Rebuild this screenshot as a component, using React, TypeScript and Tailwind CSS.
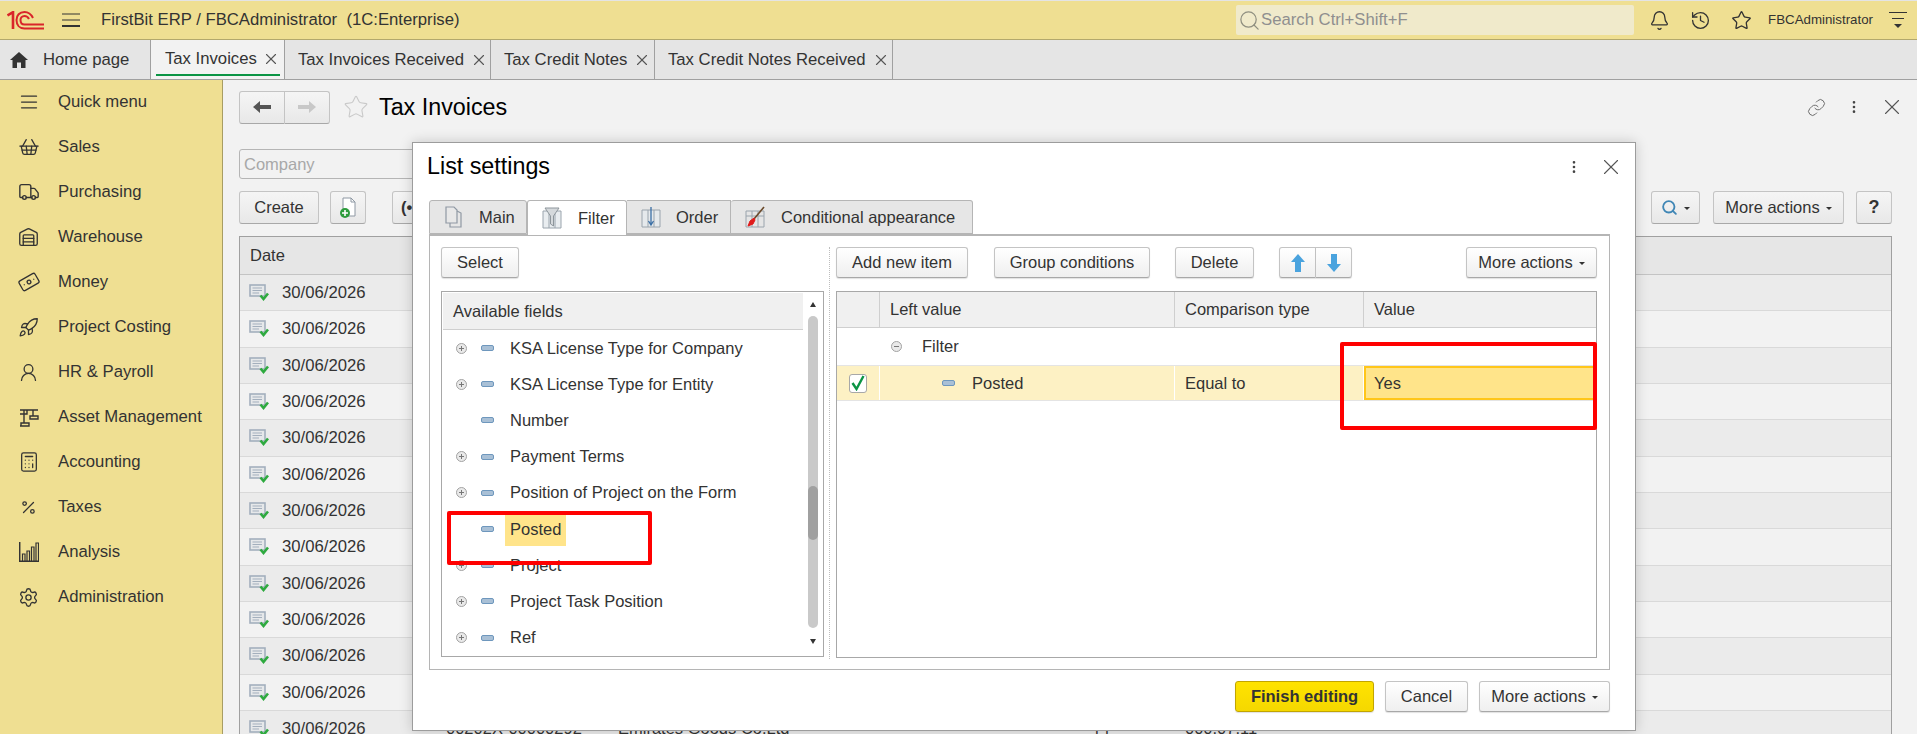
import type { ReactNode } from "react";
import {
  AlignJustify,
  Banknote,
  Bell,
  Calculator,
  History,
  Link,
  MoreVertical,
  Percent,
  Rocket,
  Search,
  Settings,
  ShoppingBasket,
  Star,
  Truck,
  UserRound,
  Warehouse,
  X,
} from "lucide-react";

function Logo() {
  return (
    <svg width="38" height="19" viewBox="0 0 38 19" fill="none" stroke="#d9252a" strokeWidth="2">
      <path d="M0.5 4.5 L6 1.2 V18" strokeWidth="2.6" />
      <path d="M26 7 C24 3 21 1 17.5 1 C12.5 1 9.5 4.5 9.5 9 C9.5 14 12.5 17.5 17.5 17.5 H37" />
      <path d="M22 8 C21 6 19.5 5 17.5 5 C15 5 13.5 7 13.5 9 C13.5 11.5 15 13.5 17.5 13.5 H37" />
    </svg>
  );
}

function Burger() {
  return (
    <svg width="18" height="14" viewBox="0 0 18 14" stroke="#333">
      <path d="M0 1 H18" />
      <path d="M0 7 H18" />
      <path d="M0 13 H18" strokeWidth="2" />
    </svg>
  );
}

function HomeIcon() {
  return (
    <svg width="18" height="16" viewBox="0 0 18 16" fill="#333">
      <path d="M9 0 L18 8 H15.5 V16 H11 V10.5 H7 V16 H2.5 V8 H0 Z" />
    </svg>
  );
}

function AssetIcon() {
  return (
    <svg width="20" height="20" viewBox="0 0 20 20" fill="none" stroke="#333" strokeWidth="1.4">
      <path d="M1 3 H19 M5 3 V16 M1 19 H10 V16 H2 V19 M8 3 V7 H1 M14 3 V9 M11 9 H19 V12 H11 Z" />
    </svg>
  );
}

function ChartIcon() {
  return (
    <svg width="20" height="20" viewBox="0 0 20 20" fill="none" stroke="#333" strokeWidth="1.2">
      <path d="M0.7 0 V19.3 H20" strokeWidth="1.5" />
      <path d="M3.5 19 V12 H6 V19 M8 19 V9 H10.5 V19 M12.5 19 V5 H15 V19 M17 19 V1 H19.5 V19" />
    </svg>
  );
}

function PostedDocIcon() {
  return (
    <svg width="20" height="17" viewBox="0 0 20 17" fill="none">
      <rect x="1" y="1" width="15" height="11" fill="#e6e8ea" stroke="#a3afbd" strokeWidth="1.6" />
      <path d="M3.5 4 H13 M3.5 6.5 H13 M3.5 9 H10" stroke="#a3afbd" />
      <path d="M11.5 11.5 L14.5 15 L19 9.5" stroke="#2eaa3f" strokeWidth="2.6" />
    </svg>
  );
}

function DocAddIcon() {
  return (
    <svg width="18" height="22" viewBox="0 0 18 22" fill="none">
      <path d="M4 1 H12 L16 5 V19 H4 Z" fill="#fff" stroke="#8e98a3" />
      <path d="M12 1 V5 H16" stroke="#8e98a3" />
      <circle cx="6" cy="16" r="5" fill="#2d9c3c" />
      <path d="M6 13 V19 M3 16 H9" stroke="#fff" strokeWidth="1.6" />
    </svg>
  );
}

function PageTabIcon() {
  return (
    <svg width="18" height="22" viewBox="0 0 18 22" fill="none" stroke="#8f98a3" strokeWidth="1.2">
      <path d="M1 1 H9 L12 4 V17 H1 Z" fill="#e8e8e8" />
      <path d="M12 5 L16 7 V21 H5 V17" />
    </svg>
  );
}

function FilterTabIcon() {
  return (
    <svg width="20" height="22" viewBox="0 0 20 22" fill="none" stroke="#9aa4ad">
      <path d="M1 4 H19 V21 H1 Z M7 4 V21 M13 4 V21" fill="#e9edf0" />
      <path d="M3 1 H17 L11.5 9 V19 L8.5 17 V9 Z" fill="#d5d9dc" stroke="#8e969c" />
    </svg>
  );
}

function OrderTabIcon() {
  return (
    <svg width="20" height="22" viewBox="0 0 20 22" fill="none" stroke="#9aa4ad">
      <path d="M1 4 H19 V21 H1 Z M7 4 V21 M13 4 V21" fill="#e5e9ec" />
      <path d="M10 1 V18 M7.5 15 L10 19 L12.5 15" stroke="#3b6fa5" strokeWidth="1.3" />
    </svg>
  );
}

function AppearanceTabIcon() {
  return (
    <svg width="20" height="22" viewBox="0 0 20 22" fill="none" stroke="#9aa4ad">
      <path d="M1 5 H19 V21 H1 Z M7 5 V21 M13 5 V21 M1 10 H19" fill="#e5e5e5" />
      <path d="M19 1 L9 13" stroke="#6b4a2a" strokeWidth="1.6" />
      <path d="M9 12 L5 15 L3 20 L8 18 L10 14 Z" fill="#e01b1b" stroke="#e01b1b" />
    </svg>
  );
}

function Expander({ minus }: { minus?: boolean }) {
  return (
    <svg width="11" height="11" viewBox="0 0 11 11" fill="#e9e9e9" stroke="#a2a2a2">
      <circle cx="5.5" cy="5.5" r="5" />
      <path d={minus ? "M3 5.5 H8" : "M3 5.5 H8 M5.5 3 V8"} stroke="#777" />
    </svg>
  );
}

function FieldIcon() {
  return <span className="block h-[6px] w-[13px] rounded-[2px] border border-[#6e97bd] bg-[#a9c0d6]" />;
}

function Arrow({ up }: { up?: boolean }) {
  return (
    <svg width="14" height="18" viewBox="0 0 14 18" fill="#4aa3de" className={up ? "" : "rotate-180"}>
      <path d="M7 0 L14 8 H10 V18 H4 V8 H0 Z" />
    </svg>
  );
}

function Caret() {
  return <span className="ml-[6px] mt-[2px] h-0 w-0 border-x-[3px] border-t-[3px] border-x-transparent border-t-[#333]" />;
}

function Btn({ children, className = "" }: { children: ReactNode; className?: string }) {
  return (
    <div
      className={`flex h-[31px] shrink-0 items-center justify-center whitespace-nowrap rounded-[3px] border border-[#c4c4c4] border-b-[#a8a8a8] bg-gradient-to-b from-white to-[#efefef] text-[16.5px] text-[#333] shadow-[0_1px_1px_rgba(0,0,0,0.12)] ${className}`}
    >
      {children}
    </div>
  );
}

function BackBtn({ children, className = "" }: { children: ReactNode; className?: string }) {
  return (
    <div
      className={`flex h-[33px] shrink-0 items-center justify-center whitespace-nowrap rounded-[3px] border border-[#c4c4c4] border-b-[#a8a8a8] bg-gradient-to-b from-[#f5f5f5] to-[#e8e8e8] text-[16.5px] text-[#333] ${className}`}
    >
      {children}
    </div>
  );
}

function PageTab({ label, className = "" }: { label: string; className?: string }) {
  return (
    <div className={`flex h-full shrink-0 items-center whitespace-nowrap border-r border-[#a0a0a0] pl-[13px] text-[16.7px] text-[#333] ${className}`}>
      {label}
      <X size={18} strokeWidth={1.5} className="ml-[6px] text-[#555]" />
    </div>
  );
}

const menu: { label: string; icon: ReactNode }[] = [
  { label: "Quick menu", icon: <AlignJustify size={20} strokeWidth={1.5} /> },
  { label: "Sales", icon: <ShoppingBasket size={22} strokeWidth={1.4} /> },
  { label: "Purchasing", icon: <Truck size={22} strokeWidth={1.5} /> },
  { label: "Warehouse", icon: <Warehouse size={21} strokeWidth={1.5} /> },
  { label: "Money", icon: <Banknote size={22} strokeWidth={1.4} className="-rotate-30" /> },
  { label: "Project Costing", icon: <Rocket size={21} strokeWidth={1.5} /> },
  { label: "HR & Payroll", icon: <UserRound size={21} strokeWidth={1.5} /> },
  { label: "Asset Management", icon: <AssetIcon /> },
  { label: "Accounting", icon: <Calculator size={22} strokeWidth={1.4} /> },
  { label: "Taxes", icon: <Percent size={17} strokeWidth={1.8} /> },
  { label: "Analysis", icon: <ChartIcon /> },
  { label: "Administration", icon: <Settings size={21} strokeWidth={1.5} /> },
];

const rows = Array.from({ length: 13 }, (_, i) => i);

const fields = [
  { label: "KSA License Type for Company", expand: true },
  { label: "KSA License Type for Entity", expand: true },
  { label: "Number", expand: false },
  { label: "Payment Terms", expand: true },
  { label: "Position of Project on the Form", expand: true },
  { label: "Posted", expand: false, selected: true },
  { label: "Project", expand: true },
  { label: "Project Task Position", expand: true },
  { label: "Ref", expand: true },
];

function ListSettings() {
  return (
    <div className="absolute left-[412px] top-[142px] flex h-[589px] w-[1224px] flex-col border border-[#9c9c9c] bg-white shadow-[0_0_12px_rgba(0,0,0,0.18)]">
      <div className="flex h-[57px] shrink-0 items-center pb-[10px] pl-[14px] pr-[11px]">
        <span className="text-[23.3px] text-black">List settings</span>
        <MoreVertical size={16} className="ml-auto text-[#444]" />
        <X size={26} strokeWidth={1} className="ml-[16px] text-[#555]" />
      </div>

      <div className="ml-[16px] flex h-[34px] w-[544px] shrink-0 text-[16.5px] text-[#333]">
        <div className="flex w-[98px] items-center gap-[16px] rounded-t-[3px] border border-[#b5b5b5] bg-[#e6e6e6] pl-[15px]">
          <PageTabIcon />
          Main
        </div>
        <div className="relative z-10 flex h-[35px] w-[100px] items-center gap-[16px] rounded-t-[3px] border border-b-0 border-[#b5b5b5] bg-white pl-[14px]">
          <FilterTabIcon />
          Filter
        </div>
        <div className="flex w-[104px] items-center gap-[15px] border-y border-r border-[#b5b5b5] bg-[#e6e6e6] pl-[14px]">
          <OrderTabIcon />
          Order
        </div>
        <div className="flex w-[242px] items-center gap-[16px] whitespace-nowrap rounded-t-[3px] border-y border-r border-[#b5b5b5] bg-[#e6e6e6] pl-[14px]">
          <AppearanceTabIcon />
          Conditional appearance
        </div>
      </div>

      <div className="ml-[16px] flex h-[436px] w-[1181px] shrink-0 border border-t-2 border-[#b5b5b5] pl-[11px] pt-[11px]">
        {/* left: available fields */}
        <div className="flex w-[383px] shrink-0 flex-col">
          <Btn className="w-[78px]">Select</Btn>
          <div className="mt-[13px] flex h-[366px] border border-[#a8a8a8] pt-px text-[16.5px] text-[#333]">
            <div className="flex min-w-0 flex-1 flex-col">
              <div className="ml-px flex h-[37px] shrink-0 items-center border-b border-[#cfcfcf] bg-[#f0f0f0] pl-[10px]">
                Available fields
              </div>
              {fields.map((f) => (
                <div key={f.label} className="flex h-[36.2px] shrink-0 items-center">
                  <span className="ml-[14px] flex w-[25px] shrink-0 items-center">{f.expand && <Expander />}</span>
                  <FieldIcon />
                  <span className={`ml-[11px] flex h-[34px] items-center whitespace-nowrap px-[5px] ${f.selected ? "bg-[#ffe48a]" : ""}`}>{f.label}</span>
                </div>
              ))}
            </div>
            <div className="flex w-[20px] shrink-0 flex-col items-center">
              <span className="mt-[9px] h-0 w-0 border-x-[3px] border-b-[5px] border-x-transparent border-b-[#333]" />
              <div className="mt-[9px] h-[312px] w-[10px] rounded-[5px] bg-[#c9c9c9] pt-[170px]">
                <div className="h-[54px] w-[10px] rounded-[5px] bg-[#a0a0a0]" />
              </div>
              <span className="mt-[11px] h-0 w-0 border-x-[3px] border-t-[5px] border-x-transparent border-t-[#333]" />
            </div>
          </div>
        </div>

        <div className="ml-[5px] h-[412px] w-0 shrink-0 border-l border-dotted border-[#bdbdbd]" />

        {/* right: filter conditions */}
        <div className="ml-[6px] flex w-[761px] shrink-0 flex-col">
          <div className="flex h-[31px]">
            <Btn className="w-[132px]">Add new item</Btn>
            <Btn className="ml-[26px] w-[156px]">Group conditions</Btn>
            <Btn className="ml-[25px] w-[79px]">Delete</Btn>
            <Btn className="ml-[25px] w-[37px] rounded-r-none">
              <Arrow up />
            </Btn>
            <Btn className="w-[36px] rounded-l-none border-l-0">
              <Arrow />
            </Btn>
            <Btn className="ml-auto w-[131px]">
              More actions
              <Caret />
            </Btn>
          </div>
          <div className="mt-[13px] h-[367px] border border-[#a8a8a8] text-[16.5px] text-[#333]">
            <div className="flex h-[36px] border-b border-[#cfcfcf]">
              <div className="w-[43px] border-r border-[#cfcfcf] bg-[#f0f0f0]" />
              <div className="flex w-[295px] items-center border-r border-[#cfcfcf] bg-[#f0f0f0] pl-[10px]">Left value</div>
              <div className="flex w-[189px] items-center border-r border-[#cfcfcf] bg-[#f0f0f0] pl-[10px]">Comparison type</div>
              <div className="flex flex-1 items-center bg-[#f0f0f0] pl-[10px]">Value</div>
            </div>
            <div className="flex h-[37px] items-center pl-[54px]">
              <Expander minus />
              <span className="ml-[20px]">Filter</span>
            </div>
            <div className="flex h-[36px] border-y border-[#e4e4e4] bg-[#fdf1c4]">
              <div className="flex w-[43px] items-center justify-center border-r border-white">
                <div className="flex h-[19px] w-[18px] items-center justify-center rounded-[3px] border border-[#a8a8a8] bg-white">
                  <svg width="14" height="16" viewBox="0 0 14 16" fill="none" stroke="#0b9444" strokeWidth="2.4">
                    <path d="M1.5 8 L5.5 14 L12.5 1" />
                  </svg>
                </div>
              </div>
              <div className="flex w-[295px] items-center border-r border-white pl-[62px]">
                <FieldIcon />
                <span className="ml-[17px]">Posted</span>
              </div>
              <div className="flex w-[189px] items-center border-r border-white pl-[10px]">Equal to</div>
              <div className="flex flex-1 items-center border-2 border-[#ffc61a] bg-[#ffe48a] pl-[8px]">Yes</div>
            </div>
          </div>
        </div>
      </div>

      <div className="ml-[16px] mt-[11px] flex h-[32px] w-[1181px] justify-end gap-[11px]">
        <div className="flex h-[31px] w-[139px] items-center justify-center rounded-[3px] border border-[#c2a500] bg-gradient-to-b from-[#ffe300] to-[#f5d800] text-[16.5px] font-bold text-[#333] shadow-[0_1px_1px_rgba(0,0,0,0.12)]">
          Finish editing
        </div>
        <Btn className="w-[83px]">Cancel</Btn>
        <Btn className="w-[131px]">
          More actions
          <Caret />
        </Btn>
      </div>
    </div>
  );
}

export default function App() {
  return (
    <div className="relative h-[734px] w-[1917px] overflow-hidden bg-[#f2f2f2] font-['Liberation_Sans',Arial,sans-serif] text-[#333]">
      {/* top bar */}
      <header className="flex h-[40px] items-center border-t border-b border-t-[#e4e4e4] border-b-[#b3a86c] bg-[#efdf92]">
        <div className="ml-[7px] flex w-[38px] items-center">
          <Logo />
        </div>
        <div className="ml-[17px]">
          <Burger />
        </div>
        <span className="ml-[21px] whitespace-pre text-[16.7px]">FirstBit ERP / FBCAdministrator  (1C:Enterprise)</span>
        <div className="ml-auto flex h-[30px] w-[398px] items-center rounded-[2px] bg-[#f0eacb] pl-[2px] text-[16.7px] text-[#8f8f8f]">
          <Search size={23} strokeWidth={1.3} className="text-[#8f8f80]" />
          Search Ctrl+Shift+F
        </div>
        <Bell size={21} strokeWidth={1.5} className="ml-[15px]" />
        <History size={21} strokeWidth={1.5} className="ml-[20px]" />
        <Star size={21} strokeWidth={1.5} className="ml-[20px]" />
        <span className="ml-[16px] text-[13.3px]">FBCAdministrator</span>
        <div className="ml-[16px] mr-[10px] flex w-[18px] flex-col items-center gap-[5px]">
          <span className="h-px w-[18px] bg-[#333]" />
          <span className="h-px w-[12px] bg-[#333]" />
          <span className="h-0 w-0 border-x-[4px] border-t-[4px] border-x-transparent border-t-[#333]" />
        </div>
      </header>

      {/* tabs */}
      <nav className="flex h-[40px] items-stretch border-b border-[#a0a0a0] bg-[#e5e5e5]">
        <div className="flex w-[151px] shrink-0 items-center whitespace-nowrap border-r border-[#a0a0a0] pl-[10px] text-[16.7px]">
          <HomeIcon />
          <span className="ml-[15px]">Home page</span>
        </div>
        <div className="flex w-[134px] shrink-0 flex-col whitespace-nowrap border-r border-[#a0a0a0] bg-[#f2f2f2] pl-[5px] pr-[4px]">
          <div className="flex flex-1 items-center pl-[9px] pt-[4px] text-[16.7px]">
            Tax Invoices
            <X size={18} strokeWidth={1.5} className="ml-[5px] text-[#555]" />
          </div>
          <div className="mb-[3px] h-[2px] bg-[#0b9444]" />
        </div>
        <PageTab label="Tax Invoices Received" className="w-[206px]" />
        <PageTab label="Tax Credit Notes" className="w-[164px]" />
        <PageTab label="Tax Credit Notes Received" className="w-[238px]" />
      </nav>

      <div className="flex h-[654px]">
        {/* sidebar */}
        <aside className="flex w-[223px] shrink-0 flex-col border-r border-[#a89d63] bg-[#efdf92]">
          {menu.map((m) => (
            <div key={m.label} className="flex h-[45px] shrink-0 items-center whitespace-nowrap pb-px text-[16.7px]">
              <span className="flex w-[58px] shrink-0 justify-center pr-[1px]">{m.icon}</span>
              {m.label}
            </div>
          ))}
        </aside>

        {/* list page behind the dialog */}
        <main className="min-w-0 flex-1 pl-[16px] pr-[25px]">
          <div className="mt-[12px] flex h-[30px] items-center">
            <BackBtn className="h-[30px] w-[46px] rounded-r-none">
              <svg width="18" height="12" viewBox="0 0 18 12" fill="#555">
                <path d="M0 6 L7 0 V4 H18 V8 H7 V12 Z" />
              </svg>
            </BackBtn>
            <BackBtn className="h-[30px] w-[45px] rounded-l-none border-l-0">
              <svg width="18" height="12" viewBox="0 0 18 12" fill="#c8c8c8">
                <path d="M18 6 L11 0 V4 H0 V8 H11 V12 Z" />
              </svg>
            </BackBtn>
            <Star size={26} strokeWidth={1} className="ml-[13px] text-[#c9c9c9]" />
            <span className="ml-[10px] text-[23.3px] text-black">Tax Invoices</span>
            <Link size={19} strokeWidth={1.2} className="ml-auto text-[#666]" />
            <MoreVertical size={16} className="ml-[20px] text-[#444]" />
            <X size={26} strokeWidth={1} className="ml-[17px] mr-[-13px] text-[#555]" />
          </div>

          <div className="mt-[27px] flex h-[30px] w-[300px] items-center rounded-[3px] border border-[#b5b5b5] bg-[#f2f2f2] pl-[4px] text-[16.5px] text-[#a8a8a8]">
            Company
          </div>

          <div className="mt-[12px] flex h-[33px] items-center">
            <BackBtn className="w-[80px]">Create</BackBtn>
            <BackBtn className="ml-[11px] w-[36px]">
              <DocAddIcon />
            </BackBtn>
            <BackBtn className="ml-[26px] w-[60px] justify-start pl-[8px] font-bold text-[#2b6ca3]">(•</BackBtn>
            <BackBtn className="ml-auto w-[49px]">
              <Search size={17} strokeWidth={2.6} className="text-[#3f86b5]" />
              <Caret />
            </BackBtn>
            <BackBtn className="ml-[13px] w-[131px]">
              More actions
              <Caret />
            </BackBtn>
            <BackBtn className="ml-[12px] w-[36px] text-[18px] font-bold">?</BackBtn>
          </div>

          <div className="mt-[12px] border border-[#a0a0a0] text-[16.5px]">
            <div className="flex h-[38px] items-center border-b border-[#c4c4c4] bg-[#e6e6e6] pl-[10px]">Date</div>
            {rows.map((i) => (
              <div key={i} className={`flex h-[36.33px] items-center whitespace-nowrap border-b border-[#d9d9d9] ${i % 2 === 0 ? "bg-[#ebebeb]" : "bg-[#f2f2f2]"}`}>
                <span className="ml-[9px] w-[33px] shrink-0">
                  <PostedDocIcon />
                </span>
                <span className="w-[164px] shrink-0 text-[16.7px]">30/06/2026</span>
                <span className="w-[172px] shrink-0">00202X-000002{80 + i}</span>
                <span className="w-[477px] shrink-0">Emirates Goods Co.Ltd</span>
                <span className="w-[90px] shrink-0">[ ]</span>
                <span>000.07.11</span>
              </div>
            ))}
          </div>
        </main>
      </div>

      <ListSettings />

      {/* red annotation frames */}
      <div className="absolute left-[447px] top-[511px] h-[54px] w-[205px] rounded-[2px] border-4 border-[#ff0000]" />
      <div className="absolute left-[1340px] top-[342px] h-[88px] w-[257px] rounded-[2px] border-4 border-[#ff0000]" />
    </div>
  );
}
